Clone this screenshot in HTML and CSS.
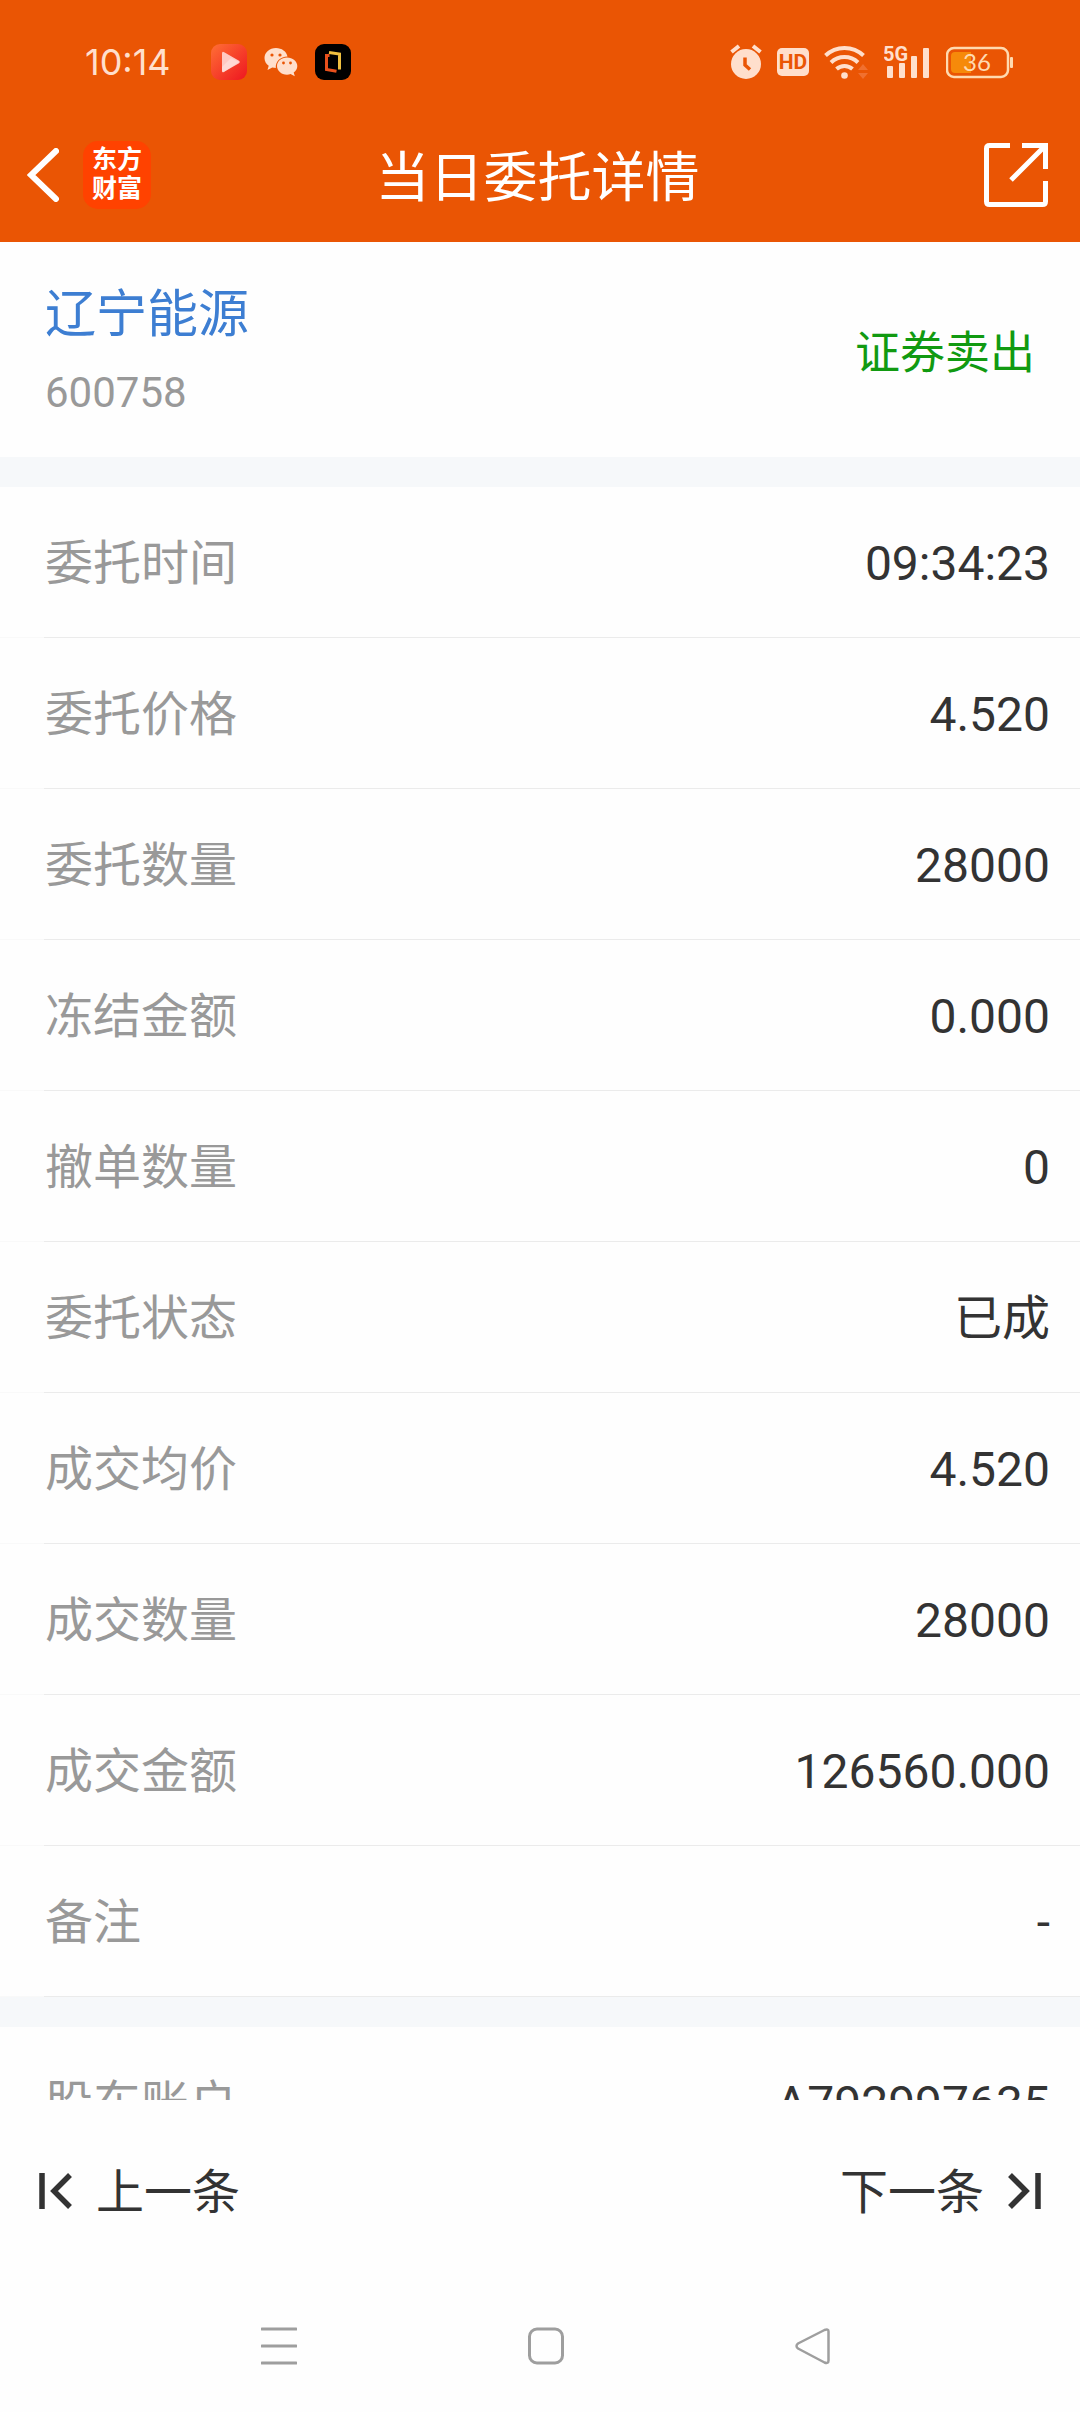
FILE: index.html
```
<!DOCTYPE html>
<html lang="zh-CN">
<head>
    <meta charset="UTF-8">
    <meta name="viewport" content="width=device-width, initial-scale=1.0">
    <title>当日委托详情</title>
    <link rel="stylesheet" href="styles.css">
</head>
<body>
    <header class="header">
        <div class="status-bar">
            <span class="clock">10:14</span>
            <div class="status-group">
                <svg width="36" height="36" viewBox="0 0 36 36">
                    <defs>
                        <linearGradient id="play-bg" x1="0" y1="0" x2="1" y2="1">
                            <stop offset="0" stop-color="#ff6f35"/>
                            <stop offset="1" stop-color="#ee1620"/>
                        </linearGradient>
                    </defs>
                    <rect width="36" height="36" rx="9" fill="url(#play-bg)"/>
                    <path d="M11 9.500q0-2.500 2.200-1.200L28 16.800q1.800 1.200 0 2.400L13.200 27.700Q11 29 11 26.500z" fill="#ffc9c2"/>
                    <path d="M11 23l9-9 8 4-16 10.500q-1-.5-1-2z" fill="#ffe4e0" opacity=".6"/>
                </svg>
                <svg width="34" height="30" viewBox="0 0 34 30">
                    <path d="M12 1C5.500 1 .5 5.500.5 11c0 3.200 1.600 6 4.200 7.800L3.500 23l4.800-2.500c1.200.3 2.300.5 3.500.5C11.300 14.500 16.500 9.500 23.500 9.500 22.500 4.500 17.800 1 12 1z" fill="#ffdfcc"/>
                    <path d="M23 10.500c-5.700 0-10 3.800-10 8.600s4.300 8.600 10 8.600c1.300 0 2.500-.2 3.600-.6l4.200 2.200-1.100-3.700c2.200-1.600 3.600-3.900 3.600-6.500 0-4.800-4.600-8.600-10.300-8.600z" fill="#ffdfcc"/>
                    <g fill="#ea5504">
                        <circle cx="8" cy="8" r="1.600"/><circle cx="16" cy="8" r="1.600"/>
                        <circle cx="19.500" cy="16" r="1.400"/><circle cx="26.500" cy="16" r="1.400"/>
                    </g>
                </svg>
                <svg width="36" height="36" viewBox="0 0 36 36">
                    <rect width="36" height="36" rx="9" fill="#000"/>
                    <path d="M14 8.500l10.500 1.500v15.500" fill="none" stroke="#f0c040" stroke-width="3"/>
                    <path d="M14.500 11.500h-3v14l10 1.800" fill="none" stroke="#e8501c" stroke-width="3"/>
                </svg>
            </div>
            <div class="status-group system">
                <svg width="32" height="36" viewBox="0 0 32 36">
                    <circle cx="16" cy="20" r="15" fill="#ffdfcc"/>
                    <path d="M1.500 8L9 2M30.500 8L23 2" stroke="#ffdfcc" stroke-width="4"/>
                    <path d="M15 13.500v7.500l5 4.500" fill="none" stroke="#ea5504" stroke-width="3.500"/>
                </svg>
                <span class="hd">HD</span>
                <svg width="45" height="36" viewBox="0 0 45 36">
                    <g fill="none" stroke="#ffdfcc" stroke-width="4">
                        <path d="M1.500 11.500a27.500 27.500 0 0 1 38 0"/>
                        <path d="M7 18.500a19.500 19.500 0 0 1 27 0"/>
                        <path d="M12.500 25a12 12 0 0 1 16 0"/>
                    </g>
                    <circle cx="20.500" cy="31.500" r="3.300" fill="#ffdfcc"/>
                    <path d="M34 26l5-6 5 6zM34 29l5 6 5-6z" fill="#f0702f"/>
                </svg>
                <svg width="47" height="36" viewBox="0 0 47 36">
                    <text x="-1" y="17" class="network">5G</text>
                    <g fill="#ffdfcc">
                        <rect x="3" y="22" width="6" height="12" rx="1"/>
                        <rect x="15" y="19" width="6" height="15" rx="1"/>
                        <rect x="27" y="12" width="6" height="22" rx="1"/>
                        <rect x="39" y="4" width="6" height="30" rx="1"/>
                    </g>
                </svg>
                <svg width="67" height="36" viewBox="0 0 67 36">
                    <rect x="1" y="4" width="61" height="29" rx="7" fill="none" stroke="#ffdab0" stroke-width="2.500"/>
                    <path d="M9 8h16v21H9q-4 0-4-4V12q0-4 4-4z" fill="#f68a0a"/>
                    <rect x="64" y="13" width="3" height="11" rx="1" fill="#ffdab0"/>
                    <text x="17" y="27" class="battery">36</text>
                </svg>
            </div>
        </div>
        <div class="app-bar">
            <div class="app-bar-left">
                <button type="button" class="icon-button" aria-label="返回">
                    <svg width="32" height="54" viewBox="0 0 32 54">
                        <path d="M29 3L4 27l25 24" fill="none" stroke="#fff" stroke-width="6" stroke-linecap="round"/>
                    </svg>
                </button>
                <span class="logo">东方<br>财富</span>
            </div>
            <h1 class="title">当日委托详情</h1>
            <button type="button" class="icon-button share" aria-label="分享">
                <svg width="64" height="64" viewBox="0 0 64 64">
                    <g fill="none" stroke="#fff" stroke-width="5">
                        <path d="M26 2.500H5.500q-3 0-3 3v53q0 3 3 3h53q3 0 3-3V38"/>
                        <path d="M38 2.500h23.500V26M60 4L27 37"/>
                    </g>
                </svg>
            </button>
        </div>
    </header>

    <main class="content">
        <section class="summary">
            <div>
                <a href="#" class="stock-name">辽宁能源</a>
                <div class="stock-code">600758</div>
            </div>
            <span class="trade-type">证券卖出</span>
        </section>

        <dl class="details">
            <div class="row"><dt>委托时间</dt><dd>09:34:23</dd></div>
            <div class="row"><dt>委托价格</dt><dd>4.520</dd></div>
            <div class="row"><dt>委托数量</dt><dd>28000</dd></div>
            <div class="row"><dt>冻结金额</dt><dd>0.000</dd></div>
            <div class="row"><dt>撤单数量</dt><dd>0</dd></div>
            <div class="row"><dt>委托状态</dt><dd>已成</dd></div>
            <div class="row"><dt>成交均价</dt><dd>4.520</dd></div>
            <div class="row"><dt>成交数量</dt><dd>28000</dd></div>
            <div class="row"><dt>成交金额</dt><dd>126560.000</dd></div>
            <div class="row"><dt>备注</dt><dd>-</dd></div>
        </dl>

        <dl class="details">
            <div class="row"><dt>股东账户</dt><dd>A792997635</dd></div>
        </dl>
    </main>

    <footer class="pager">
        <button type="button" class="pager-button">
            <svg width="34" height="36" viewBox="0 0 34 36">
                <path d="M3 0v36M31 2L15 18l16 16" fill="none" stroke="#333" stroke-width="5.500"/>
            </svg>
            <span class="pager-label">上一条</span>
        </button>
        <button type="button" class="pager-button">
            <span class="pager-label">下一条</span>
            <svg width="34" height="36" viewBox="0 0 34 36">
                <path d="M31 0v36M3 2l16 16L3 34" fill="none" stroke="#333" stroke-width="5.500"/>
            </svg>
        </button>
    </footer>

    <nav class="system-nav">
        <button type="button" class="icon-button" aria-label="最近任务">
            <svg width="36" height="38" viewBox="0 0 36 38">
                <path d="M1 2h34M1 19h34M1 36h34" stroke="#9e9e9e" stroke-width="3" stroke-linecap="round"/>
            </svg>
        </button>
        <button type="button" class="icon-button" aria-label="主屏幕">
            <svg width="36" height="38" viewBox="0 0 36 38">
                <rect x="1.500" y="2" width="33" height="34" rx="7.500" fill="none" stroke="#9e9e9e" stroke-width="3"/>
            </svg>
        </button>
        <button type="button" class="icon-button" aria-label="返回上一级">
            <svg width="36" height="38" viewBox="0 0 36 38">
                <path d="M29.500 3L3 16.500q-3 2.500 0 5L29.500 35.500q4 1.500 4-2v-29q0-3-4-1.500z" fill="none" stroke="#9e9e9e" stroke-width="2.500" stroke-linejoin="round"/>
            </svg>
        </button>
    </nav>
</body>
</html>
```
FILE: styles.css
```
* {
    box-sizing: border-box;
}

body {
    margin: 0;
    height: 100vh;
    display: flex;
    flex-direction: column;
    background-color: #fefefe;
    color: #333;
    font-family: Roboto, "Noto Sans CJK SC", sans-serif;
    font-size: 48px;
    line-height: 60px;
}

svg {
    display: block;
    flex: none;
}

button {
    padding: 0;
    border: none;
    background: none;
    color: inherit;
    font: inherit;
    cursor: pointer;
}

/* Header */
.header {
    background-color: #ea5504;
    color: white;
}

.status-bar {
    display: flex;
    align-items: center;
    height: 124px;
    padding: 0 67px 0 85px;
    color: #ffdfcc;
}

.clock {
    margin-right: 40px;
    font-family: Inter, sans-serif;
    font-size: 36px;
}

.status-group {
    display: flex;
    align-items: center;
    gap: 17px;
}

.system {
    margin-left: auto;
    gap: 15px;
}

.hd {
    width: 32px;
    border-radius: 5px;
    background-color: #ffdfcc;
    color: #ea5504;
    font-size: 21px;
    font-weight: bold;
    line-height: 28px;
    text-align: center;
}

.network {
    fill: #ffdfcc;
    font-size: 20px;
    font-weight: bold;
}

.battery {
    fill: #ffdab0;
    font-family: Lato, sans-serif;
    font-size: 24px;
}

.app-bar {
    display: grid;
    grid-template-columns: 1fr auto 1fr;
    align-items: center;
    height: 118px;
    padding: 0 32px 17px 27px;
}

.app-bar-left {
    display: flex;
    align-items: center;
    gap: 24px;
}

.logo {
    width: 68px;
    height: 68px;
    padding: 4px 0;
    border-radius: 15px;
    background-color: #ff4200;
    font-size: 25px;
    font-weight: bold;
    line-height: 29px;
    text-align: center;
}

.title {
    margin: 0;
    padding-top: 8px;
    font-size: 54px;
    font-weight: normal;
}

.share {
    justify-self: end;
}

/* Order details */
.content {
    flex: 1;
    min-height: 0;
    overflow: hidden;
}

.summary {
    display: flex;
    align-items: center;
    justify-content: space-between;
    height: 215px;
    padding: 8px 45px 0;
}

.stock-name {
    display: block;
    margin-bottom: 18px;
    color: #3d7ed2;
    font-size: 51px;
    text-decoration: none;
}

.stock-code {
    color: #999;
    font-size: 42px;
}

.trade-type {
    color: #119a11;
    font-size: 45px;
}

.details {
    margin: 0;
    border-top: 30px solid #f6f8fa;
}

.row {
    display: flex;
    align-items: center;
    justify-content: space-between;
    height: 151px;
    padding: 4px 30px 0 45px;
    border-bottom: 1px solid;
    border-image: linear-gradient(to right, #f9f9f9 45px, #ebebeb 45px) 1;
}

.row dt {
    color: #999;
}

.row dd {
    margin: 0;
}

/* Previous / next order */
.pager {
    display: flex;
    align-items: center;
    justify-content: space-between;
    height: 182px;
    padding: 0 39px;
}

.pager-button {
    display: flex;
    align-items: center;
    gap: 23px;
}

.pager-label {
    padding-top: 4px;
}

.system-nav {
    display: flex;
    height: 130px;
    padding: 0 134px 2px 145px;
}

.system-nav .icon-button {
    flex: 1;
    display: flex;
    align-items: center;
    justify-content: center;
}
```
